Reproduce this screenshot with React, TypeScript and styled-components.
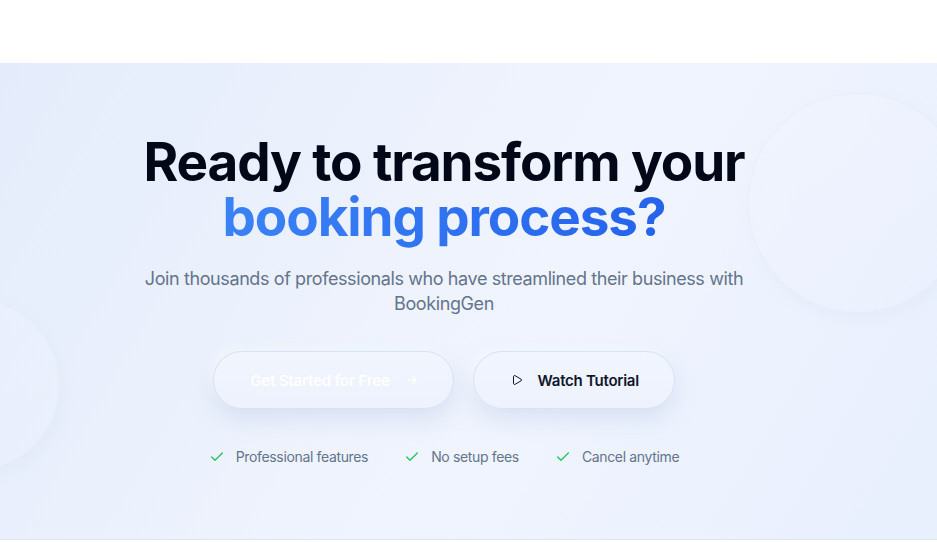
import React from "react";
import styled, { createGlobalStyle } from "styled-components";
import { Check, Play, ArrowRight } from "lucide-react";

const Global = createGlobalStyle`
  html, body { margin: 0; padding: 0; background: #ffffff; }
  body { font-family: Inter, "Noto Sans", sans-serif; -webkit-font-smoothing: antialiased; }
  * { box-sizing: border-box; }
`;

const Header = styled.header`
  height: 63px;
  background: #ffffff;
`;

const Section = styled.section`
  position: relative;
  overflow: hidden;
  height: 477px;
  border-bottom: 1px solid #dfe5ee;
  background: linear-gradient(120deg, #e4ecfb 0%, #eef3fd 45%, #eff4fe 60%, #e8effd 100%);
`;

const Orb = styled.div<{ $size: number; $top: number; $left: number }>`
  position: absolute;
  width: ${(p) => p.$size}px;
  height: ${(p) => p.$size}px;
  top: ${(p) => p.$top}px;
  left: ${(p) => p.$left}px;
  border-radius: 50%;
  background: linear-gradient(145deg, rgba(241, 245, 254, 0.35), rgba(234, 240, 253, 0.25));
  box-shadow: 3px 6px 16px rgba(150, 170, 210, 0.07), inset 0 0 0 1px rgba(222, 230, 244, 0.3);
`;

const Inner = styled.div`
  position: relative;
  width: 888px;
  padding-top: 72px;
  display: flex;
  flex-direction: column;
  align-items: center;
  text-align: center;
`;

const Title = styled.h1`
  margin: 0;
  font-size: 53px;
  line-height: 55px;
  font-weight: 700;
  letter-spacing: -1.1px;
  color: #020817;
`;

const Accent = styled.span`
  display: inline-block;
  padding-bottom: 8px;
  margin-bottom: -8px;
  background: linear-gradient(90deg, #3b82f6 0%, #2563eb 100%);
  -webkit-background-clip: text;
  background-clip: text;
  color: transparent;
`;

const Subtitle = styled.p`
  margin: 21px 0 0;
  max-width: 620px;
  font-size: 18px;
  line-height: 25px;
  letter-spacing: -0.4px;
  color: #64748b;
`;

const Actions = styled.div`
  display: flex;
  gap: 19px;
  margin-top: 35px;
`;

const Pill = styled.button<{ $primary?: boolean }>`
  height: 58px;
  display: inline-flex;
  align-items: center;
  gap: 15px;
  padding: ${(p) => (p.$primary ? "0 34px 0 36px" : "0 35px 0 37px")};
  border-radius: 999px;
  border: 1px solid #d7e2f6;
  background: linear-gradient(180deg, #f1f5fe 0%, #edf2fd 100%);
  box-shadow: 0 10px 22px rgba(160, 178, 214, 0.28), -4px -4px 10px rgba(255, 255, 255, 0.5);
  font-family: Inter, sans-serif;
  font-size: 15px;
  letter-spacing: ${(p) => (p.$primary ? "-0.15px" : "-0.25px")};
  font-weight: 600;
  color: ${(p) => (p.$primary ? "#ffffff" : "#0f172a")};
  cursor: pointer;
`;

const Perks = styled.ul`
  list-style: none;
  display: flex;
  gap: 36px;
  margin: 38px 0 0;
  padding: 0;
`;

const Perk = styled.li`
  display: flex;
  align-items: center;
  gap: 11px;
  font-size: 14px;
  line-height: 20px;
  letter-spacing: -0.35px;
  color: #64748b;
`;

export default function App() {
  return (
    <>
      <Global />
      <Header />
      <Section>
        <Orb $size={220} $top={30} $left={748} />
        <Orb $size={172} $top={236} $left={-112} />
        <Inner>
          <Title>
            Ready to transform your
            <br />
            <Accent>booking process?</Accent>
          </Title>
          <Subtitle>
            Join thousands of professionals who have streamlined their business with BookingGen
          </Subtitle>
          <Actions>
            <Pill $primary>
              Get Started for Free
              <ArrowRight size={14} strokeWidth={2} />
            </Pill>
            <Pill>
              <Play size={12} strokeWidth={2} />
              Watch Tutorial
            </Pill>
          </Actions>
          <Perks>
            <Perk>
              <Check size={16} color="#22c55e" strokeWidth={2} />
              Professional features
            </Perk>
            <Perk>
              <Check size={16} color="#22c55e" strokeWidth={2} />
              No setup fees
            </Perk>
            <Perk>
              <Check size={16} color="#22c55e" strokeWidth={2} />
              Cancel anytime
            </Perk>
          </Perks>
        </Inner>
      </Section>
    </>
  );
}
